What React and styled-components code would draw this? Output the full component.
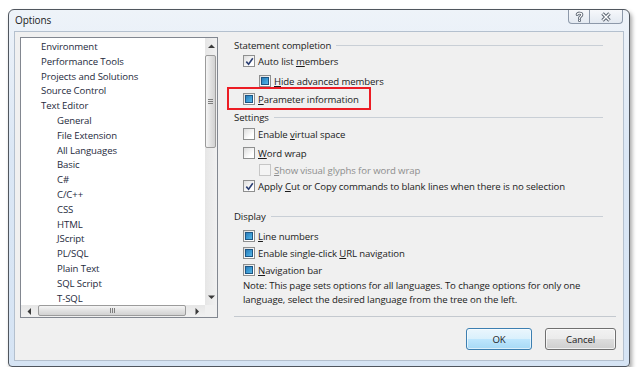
import React from "react";
import styled, {createGlobalStyle} from "styled-components";

const GlobalStyle = createGlobalStyle`
    html, body {
        margin: 0;
        padding: 0;
        background: #ffffff;
    }
    body {
        font-family: "Open Sans", "Noto Sans", sans-serif;
        font-size: 9.6px;
        letter-spacing: -0.1px;
        color: #1f2630;
    }
`;

const Window = styled.div`
    box-sizing: border-box;
    width: 622px;
    height: 358px;
    margin: 9px 0 0 8px;
    padding: 0 5px 5px 5px;
    border: 1px solid #50565e;
    border-radius: 6px 6px 4px 4px;
    background: linear-gradient(#eef3f9, #dbe7f5 40%, #d6e4f4);
    box-shadow: 2px 3px 4px rgba(0, 0, 0, 0.35);
    display: flex;
    flex-direction: column;
`;

const TitleBar = styled.div`
    height: 21px;
    display: flex;
    align-items: flex-start;
    justify-content: space-between;
`;

const Title = styled.div`
    line-height: 21px;
    padding-left: 1px;
    font-size: 10px;
    color: #1b1b1b;
`;

const CaptionButtons = styled.div`
    display: flex;
    margin-right: 1px;
`;

const CaptionButton = styled.div`
    width: ${p => p.$w}px;
    height: 14px;
    box-sizing: border-box;
    border: 1px solid #8d99aa;
    border-top: none;
    border-left: ${p => (p.$first ? "1px solid #8d99aa" : "none")};
    border-radius: ${p => (p.$first ? "0 0 0 4px" : "0 0 4px 0")};
    background: linear-gradient(#f6f8fb, #e3e9f1);
    display: flex;
    align-items: center;
    justify-content: center;
`;

const Client = styled.div`
    flex: 1;
    background: #f0f0f0;
    border: 1px solid #b4c0ce;
    display: flex;
    flex-direction: column;
    padding: 5px 7px 0 5px;
`;

const MainRow = styled.div`
    display: flex;
    height: 281px;
`;

const TreeBox = styled.div`
    box-sizing: border-box;
    width: 198px;
    height: 281px;
    border: 1px solid #828790;
    background: #ffffff;
    display: flex;
    flex-direction: column;
`;

const TreeTop = styled.div`
    flex: 1;
    display: flex;
    min-height: 0;
`;

const TreeList = styled.div`
    flex: 1;
    overflow: hidden;
    padding-top: 2px;
`;

const TreeItem = styled.div`
    line-height: 14.8px;
    height: 14.8px;
    white-space: nowrap;
    padding-left: ${p => (p.$level ? 36 : 20)}px;
    color: #1e2a3c;
`;

const VScroll = styled.div`
    width: 12px;
    display: flex;
    flex-direction: column;
    background: linear-gradient(90deg, #e6e6e6, #f1f1f1);
`;

const HScrollRow = styled.div`
    height: 12px;
    display: flex;
`;

const HScroll = styled.div`
    flex: 1;
    display: flex;
    background: linear-gradient(#e6e6e6, #f1f1f1);
`;

const Corner = styled.div`
    width: 12px;
    background: #f0f0f0;
`;

const ArrowCell = styled.div`
    ${p => (p.$horizontal ? "width: 16px;" : "height: 16px;")}
    display: flex;
    align-items: center;
    justify-content: center;
`;

const Track = styled.div`
    flex: 1;
    display: flex;
    ${p => (p.$horizontal ? "flex-direction: row;" : "flex-direction: column;")}
`;

const Thumb = styled.div`
    box-sizing: border-box;
    ${p => (p.$horizontal
        ? "height: 11px; margin-top: 0; margin-left: 1px; width: 148px; background: linear-gradient(#f5f5f5, #e2e2e2 50%, #d2d2d2);"
        : "width: 11px; margin-left: 0; margin-top: 1px; height: 93px; background: linear-gradient(90deg, #f5f5f5, #e2e2e2 50%, #d2d2d2);")}
    border: 1px solid #9b9b9b;
    border-radius: 2px;
    display: flex;
    align-items: center;
    justify-content: center;
`;

const Grip = styled.div`
    display: flex;
    flex-direction: ${p => (p.$horizontal ? "row" : "column")};
    gap: 1px;

    span {
        display: block;
        background: #7d7d7d;
        ${p => (p.$horizontal ? "width: 1px; height: 5px;" : "width: 5px; height: 1px;")}
    }
`;

const RightPanel = styled.div`
    flex: 1;
    margin-left: 8px;
    padding-left: 8px;
    display: flex;
    flex-direction: column;
`;

const GroupHeader = styled.div`
    height: 16px;
    margin-top: ${p => p.$mt || 0}px;
    margin-right: 13px;
    display: flex;
    align-items: center;
    white-space: nowrap;
    color: #1b1b1b;

    &::after {
        content: "";
        flex: 1;
        height: 0;
        border-top: 1px solid #c9cfd6;
        margin-left: 5px;
        margin-top: 1px;
    }
`;

const Row = styled.div`
    position: relative;
    height: 16px;
    margin-top: ${p => p.$mt || 0}px;
    padding-left: ${p => p.$indent}px;
    display: flex;
    align-items: center;
    gap: 3px;
    white-space: nowrap;
`;

const Label = styled.span`
    color: ${p => (p.$disabled ? "#8e8e8e" : "#1b1b1b")};
`;

const U = styled.span`
    text-decoration: underline;
    text-underline-offset: 1px;
`;

const Box = styled.div`
    box-sizing: border-box;
    width: 12px;
    height: 12px;
    border: 1px solid ${p => (p.$disabled ? "#c6c6c6" : "#8e8f8f")};
    background: ${p => (p.$disabled ? "#f4f4f4" : "linear-gradient(135deg, #dcdcdc, #ffffff 70%)")};
    display: flex;
    align-items: center;
    justify-content: center;
`;

const Fill = styled.div`
    width: 8px;
    height: 8px;
    box-sizing: border-box;
    border: 1px solid #1d5684;
    background: linear-gradient(135deg, #2b7cb9, #3fa0d8 60%, #5fb6e2);
`;

const Highlight = styled.div`
    position: absolute;
    left: -7px;
    top: -4px;
    width: 144px;
    height: 23px;
    box-sizing: border-box;
    border: 2px solid #ec1c24;
`;

const Note = styled.div`
    margin-top: 1px;
    padding-left: 9px;
    line-height: 14px;
    color: #1b1b1b;
    white-space: nowrap;
`;

const Separator = styled.div`
    margin-top: auto;
    margin-bottom: 1px;
    height: 0;
    border-top: 1px solid #c4c9cf;
`;

const ButtonRow = styled.div`
    display: flex;
    justify-content: flex-end;
    gap: 13px;
    padding-top: 10px;
`;

const Button = styled.div`
    box-sizing: border-box;
    width: ${p => p.$w}px;
    height: 22px;
    border-radius: 3px;
    display: flex;
    align-items: center;
    justify-content: center;
    color: #1b1b1b;
    border: 1px solid ${p => (p.$default ? "#3c7fb1" : "#707070")};
    background: ${p => (p.$default
        ? "linear-gradient(#eaf6fd, #d9f0fc 50%, #bee6fd 51%, #a7d9f5)"
        : "linear-gradient(#f2f2f2, #ebebeb 50%, #dddddd 51%, #cfcfcf)")};
    box-shadow: inset 0 0 0 1px ${p => (p.$default ? "rgba(255,255,255,0.6)" : "rgba(255,255,255,0.7)")};
`;

function Arrow({dir}) {
    const points = {
        up: "0,4 3.5,0.5 7,4",
        down: "0,0.5 3.5,4 7,0.5",
        left: "4,0 0.5,3.5 4,7",
        right: "0.5,0 4,3.5 0.5,7",
    }[dir];
    const vertical = dir === "up" || dir === "down";
    return (
        <svg width={vertical ? 7 : 5} height={vertical ? 5 : 7} viewBox={vertical ? "0 0 7 5" : "0 0 5 7"}>
            <polygon points={points} fill="#3a3a3a" />
        </svg>
    );
}

function Check({state}) {
    return (
        <Box $disabled={state === "disabled"}>
            {state === "checked" && (
                <svg width="9" height="9" viewBox="0 0 9 9">
                    <path d="M1.3 4.6 L3.6 7.2 L7.8 1.2" fill="none" stroke="#2b3f73" strokeWidth="1.6" />
                </svg>
            )}
            {state === "filled" && <Fill />}
        </Box>
    );
}

function HelpIcon() {
    const d = "M3.2 3.6 C3.2 1.6 7.8 1.6 7.8 3.8 C7.8 5.4 5.5 5.4 5.5 7.3 M5.5 9.2 L5.5 9.6";
    return (
        <svg width="11" height="12" viewBox="0 0 11 12">
            <path d={d} fill="none" stroke="#5d6673" strokeWidth="3" strokeLinecap="round" />
            <path d={d} fill="none" stroke="#ffffff" strokeWidth="1.2" strokeLinecap="round" />
        </svg>
    );
}

function CloseIcon() {
    const d = "M2.5 2.5 L9.5 9.5 M9.5 2.5 L2.5 9.5";
    return (
        <svg width="12" height="12" viewBox="0 0 12 12">
            <path d={d} fill="none" stroke="#5d6673" strokeWidth="3.4" />
            <path d={d} fill="none" stroke="#ffffff" strokeWidth="1.4" />
        </svg>
    );
}

const TREE = [
    ["Environment", 0],
    ["Performance Tools", 0],
    ["Projects and Solutions", 0],
    ["Source Control", 0],
    ["Text Editor", 0],
    ["General", 1],
    ["File Extension", 1],
    ["All Languages", 1],
    ["Basic", 1],
    ["C#", 1],
    ["C/C++", 1],
    ["CSS", 1],
    ["HTML", 1],
    ["JScript", 1],
    ["PL/SQL", 1],
    ["Plain Text", 1],
    ["SQL Script", 1],
    ["T-SQL", 1],
];

function App() {
    return (
        <>
            <GlobalStyle />
            <Window>
                <TitleBar>
                    <Title>Options</Title>
                    <CaptionButtons>
                        <CaptionButton $w={22} $first>
                            <HelpIcon />
                        </CaptionButton>
                        <CaptionButton $w={33}>
                            <CloseIcon />
                        </CaptionButton>
                    </CaptionButtons>
                </TitleBar>

                <Client>
                    <MainRow>
                        <TreeBox>
                            <TreeTop>
                                <TreeList>
                                    {TREE.map(([name, level]) => (
                                        <TreeItem key={name} $level={level}>{name}</TreeItem>
                                    ))}
                                </TreeList>
                                <VScroll>
                                    <ArrowCell><Arrow dir="up" /></ArrowCell>
                                    <Track>
                                        <Thumb>
                                            <Grip><span /><span /><span /></Grip>
                                        </Thumb>
                                    </Track>
                                    <ArrowCell><Arrow dir="down" /></ArrowCell>
                                </VScroll>
                            </TreeTop>
                            <HScrollRow>
                                <HScroll>
                                    <ArrowCell $horizontal><Arrow dir="left" /></ArrowCell>
                                    <Track $horizontal>
                                        <Thumb $horizontal>
                                            <Grip $horizontal><span /><span /><span /></Grip>
                                        </Thumb>
                                    </Track>
                                    <ArrowCell $horizontal><Arrow dir="right" /></ArrowCell>
                                </HScroll>
                                <Corner />
                            </HScrollRow>
                        </TreeBox>

                        <RightPanel>
                            <GroupHeader>Statement completion</GroupHeader>
                            <Row $indent={9}>
                                <Check state="checked" />
                                <Label>Auto list <U>m</U>embers</Label>
                            </Row>
                            <Row $indent={25} $mt={4}>
                                <Check state="filled" />
                                <Label><U>H</U>ide advanced members</Label>
                            </Row>
                            <Row $indent={9} $mt={2}>
                                <Check state="filled" />
                                <Label><U>P</U>arameter information</Label>
                                <Highlight />
                            </Row>

                            <GroupHeader $mt={2}>Settings</GroupHeader>
                            <Row $indent={9} $mt={1}>
                                <Check state="empty" />
                                <Label>Enable <U>v</U>irtual space</Label>
                            </Row>
                            <Row $indent={9} $mt={3}>
                                <Check state="empty" />
                                <Label><U>W</U>ord wrap</Label>
                            </Row>
                            <Row $indent={25} $mt={1}>
                                <Check state="disabled" />
                                <Label $disabled><U>S</U>how visual glyphs for word wrap</Label>
                            </Row>
                            <Row $indent={9}>
                                <Check state="checked" />
                                <Label>Apply <U>C</U>ut or Copy commands to blank lines when there is no selection</Label>
                            </Row>

                            <GroupHeader $mt={14}>Display</GroupHeader>
                            <Row $indent={9} $mt={4}>
                                <Check state="filled" />
                                <Label><U>L</U>ine numbers</Label>
                            </Row>
                            <Row $indent={9} $mt={1}>
                                <Check state="filled" />
                                <Label>Enable single-click <U>U</U>RL navigation</Label>
                            </Row>
                            <Row $indent={9} $mt={1}>
                                <Check state="filled" />
                                <Label><U>N</U>avigation bar</Label>
                            </Row>
                            <Note>
                                Note: This page sets options for all languages. To change options for only one
                                <br />
                                language, select the desired language from the tree on the left.
                            </Note>

                            <Separator />
                        </RightPanel>
                    </MainRow>

                    <ButtonRow>
                        <Button $w={66} $default>OK</Button>
                        <Button $w={71}>Cancel</Button>
                    </ButtonRow>
                </Client>
            </Window>
        </>
    );
}

export default App;
